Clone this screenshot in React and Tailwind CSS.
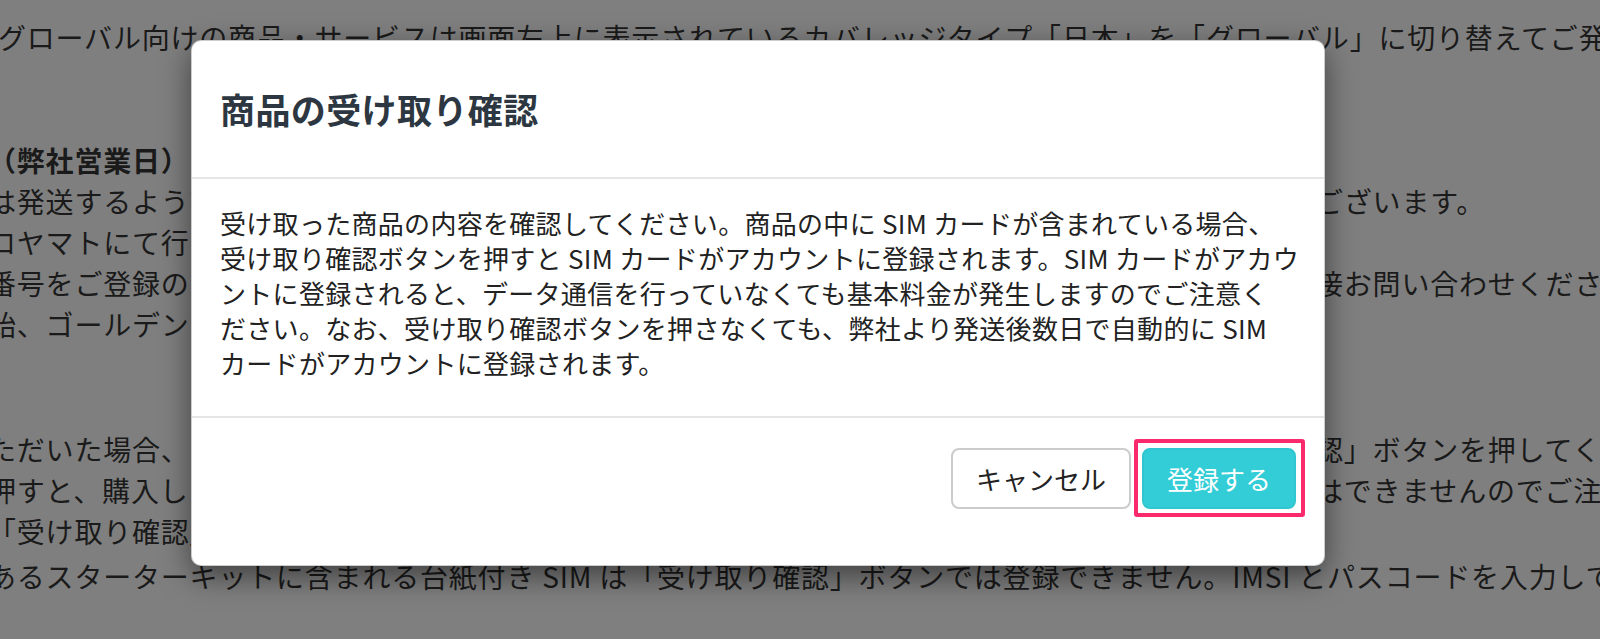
import React from "react";

function BgLine({ left, right, bold = false, className = "" }) {
  return (
    <div className={`flex h-[41px] items-center whitespace-nowrap ${bold ? "font-bold" : ""} ${className}`}>
      <span className="block w-[1327px] shrink-0 overflow-hidden">{left}</span>
      {right ? <span className="block shrink-0">{right}</span> : null}
    </div>
  );
}

export default function App() {
  return (
    <div className="relative h-[639px] w-[1600px] overflow-hidden bg-[#7f7f7f] font-['Noto_Sans_CJK_JP','Noto_Sans',sans-serif]">
      {/* page content under the backdrop */}
      <div className="ml-[-12px] pt-[17px] text-[28px] leading-[41px] tracking-[0.8px] text-[#1a1a1a]">
        <div className="ml-[10px] h-[41px] whitespace-nowrap">
          グローバル向けの商品・サービスは画面左上に表示されているカバレッジタイプ「日本」を「グローバル」に切り替えてご発注ください。
        </div>
        <div className="h-[82px]" />
        <BgLine bold left="（弊社営業日）" />
        <BgLine
          left="は発送するよう努めておりますが、在庫状況や配送状況によりお届けまでにお時間をいただく場合が"
          right="ございます。"
        />
        <BgLine left="ロヤマトにて行います。お届け先の住所はご注文時にご入力いただいた住所となります。" />
        <BgLine
          left="番号をご登録のうえ、配送状況はヤマト運輸の追跡サービスをご利用いただくか、配送業者へ直"
          right="接お問い合わせください。"
        />
        <BgLine left="始、ゴールデンウィークなどの長期休暇期間中は発送までにお時間をいただく場合がございます。" />
        <div className="h-[84px]" />
        <BgLine
          left="ただいた場合、ユーザーコンソールの「発送済み」の注文詳細画面から「受け取り確"
          right="認」ボタンを押してください。"
        />
        <BgLine
          left="押すと、購入した SIM がアカウントに登録されます。登録後に取り消すこと"
          right="はできませんのでご注意ください。"
        />
        <BgLine left="「受け取り確認」ボタンは発送完了後に表示されます。" />
        <div className="mt-[4px] h-[41px] whitespace-nowrap">
          あるスターターキットに含まれる台紙付き SIM は「受け取り確認」ボタンでは登録できません。IMSI とパスコードを入力してください。
        </div>
      </div>

      {/* modal dialog */}
      <div className="absolute left-[191px] top-[40px] w-[1134px] rounded-[10px] border border-black/20 bg-white shadow-[0_10px_30px_rgba(0,0,0,0.5)]">
        <div className="border-b-2 border-[#e5e5e5] px-[28px] pb-[44px] pt-[43px]">
          <h4 className="text-[35px] font-bold leading-[49px] tracking-[0.4px] text-[#2d3741]">
            商品の受け取り確認
          </h4>
        </div>
        <div className="px-[28px] pb-[36px] pt-[26px] text-[26px] leading-[35px] tracking-[0.3px] text-[#222222]">
          <p className="whitespace-nowrap">
            受け取った商品の内容を確認してください。商品の中に SIM カードが含まれている場合、
            <br />
            受け取り確認ボタンを押すと SIM カードがアカウントに登録されます。SIM カードがアカウ
            <br />
            ントに登録されると、データ通信を行っていなくても基本料金が発生しますのでご注意く
            <br />
            ださい。なお、受け取り確認ボタンを押さなくても、弊社より発送後数日で自動的に SIM
            <br />
            カードがアカウントに登録されます。
          </p>
        </div>
        <div className="flex items-center justify-end gap-[11px] border-t-2 border-[#e5e5e5] px-[28px] pb-[56px] pt-[30px]">
          <button className="h-[61px] rounded-[8px] border-2 border-[#cccccc] bg-white px-[23px] text-[26px] leading-[37px] text-[#222222]">
            キャンセル
          </button>
          <div className="relative">
            <button className="h-[61px] rounded-[8px] border-2 border-[#2fc6d0] bg-[#33cdd7] px-[23px] text-[26px] leading-[37px] text-white">
              登録する
            </button>
            <div className="pointer-events-none absolute bottom-[-8px] left-[-8px] right-[-9px] top-[-9px] rounded-[3px] border-4 border-[#fb2a6d]" />
          </div>
        </div>
      </div>
    </div>
  );
}
